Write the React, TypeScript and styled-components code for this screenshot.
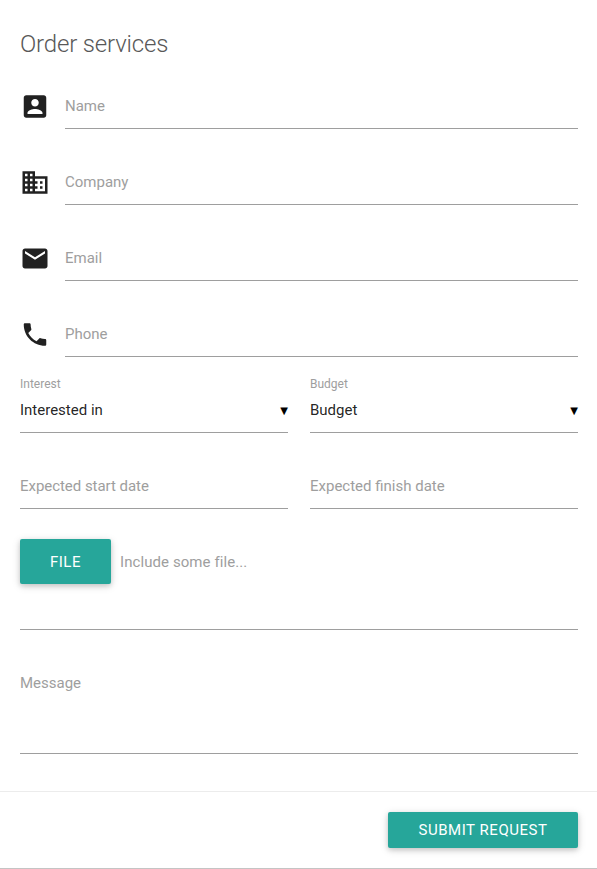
import React from 'react';
import styled, { createGlobalStyle } from 'styled-components';

const Global = createGlobalStyle`
  *, *::before, *::after { box-sizing: border-box; }
  body { margin: 0; background: #fff; font-family: Roboto, sans-serif; font-size: 15px; line-height: 1.5; color: rgba(0,0,0,0.87); }
`;

const elevation = '0 2px 5px 0 rgba(0,0,0,0.16), 0 2px 10px 0 rgba(0,0,0,0.12)';

const Card = styled.form`
  display: flex;
  flex-direction: column;
  height: 869px;
  background: #fff;
  border-bottom: 1px solid #c4c4c4;
`;

const Content = styled.div`
  height: 791px;
  padding: 28px 19px 0 20px;
`;

const Title = styled.h1`
  margin: 0;
  height: 56px;
  font-size: 24px;
  font-weight: 300;
  line-height: 32px;
  letter-spacing: -0.16px;
  color: #585858;
`;

const Field = styled.div<{ $height?: number }>`
  display: flex;
  align-items: flex-start;
  height: ${(p) => p.$height ?? 76}px;
`;

const IconBox = styled.div`
  flex: 0 0 45px;
  height: 45px;
  padding-top: 7px;
  color: #212121;
  svg { display: block; width: 30px; height: 30px; fill: currentColor; }
`;

const Control = styled.div<{ $height?: number; $muted?: boolean; $spacing?: number }>`
  flex: 1;
  height: ${(p) => p.$height ?? 45}px;
  border-bottom: 1px solid #9e9e9e;
  line-height: 44px;
  letter-spacing: ${(p) => p.$spacing ?? 0}px;
  color: ${(p) => (p.$muted ? '#9e9e9e' : 'rgba(0,0,0,0.87)')};
`;

const Columns = styled.div`
  display: grid;
  grid-template-columns: 268px 268px;
  column-gap: 22px;
`;

const SelectField = styled.div`
  position: relative;
  height: 76px;
`;

const FloatingLabel = styled.label`
  position: absolute;
  top: -13px;
  left: 0;
  font-size: 12px;
  line-height: 18px;
  color: #9e9e9e;
`;

const SelectControl = styled(Control)`
  display: flex;
  justify-content: space-between;
`;

const Caret = styled.span`
  font-family: "DejaVu Sans", sans-serif;
  font-size: 10px;
  line-height: 46px;
  letter-spacing: 0;
  color: #000;
`;

const Button = styled.button<{ $width: number; $height: number }>`
  width: ${(p) => p.$width}px;
  height: ${(p) => p.$height}px;
  padding: 0;
  border: 0;
  border-radius: 2px;
  background: #26a69a;
  color: #fff;
  font: 400 15px Roboto, sans-serif;
  letter-spacing: 0.54px;
  text-transform: uppercase;
  box-shadow: ${elevation};
`;

const FileField = styled.div`
  display: flex;
  flex-wrap: wrap;
  align-content: flex-start;
  column-gap: 9px;
  height: 122px;
`;

const FileHint = styled.span`
  line-height: 46px;
  letter-spacing: 0.08px;
  color: #9e9e9e;
`;

const FileLine = styled.div`
  flex: 0 0 100%;
  height: 45px;
  border-bottom: 1px solid #9e9e9e;
`;

const Footer = styled.footer`
  display: flex;
  justify-content: flex-end;
  align-items: flex-start;
  height: 77px;
  padding: 20px 19px 0;
  border-top: 1px solid rgba(160,160,160,0.2);
`;

const contacts = [
  { label: 'Name', path: 'M3 5v14c0 1.1.89 2 2 2h14c1.1 0 2-.9 2-2V5c0-1.1-.9-2-2-2H5c-1.11 0-2 .9-2 2zm12 4c0 1.66-1.34 3-3 3s-3-1.34-3-3 1.34-3 3-3 3 1.34 3 3zm-9 8c0-2 4-3.1 6-3.1s6 1.1 6 3.1v1H6v-1z' },
  { label: 'Company', path: 'M12 7V3H2v18h20V7H12zM6 19H4v-2h2v2zm0-4H4v-2h2v2zm0-4H4V9h2v2zm0-4H4V5h2v2zm4 12H8v-2h2v2zm0-4H8v-2h2v2zm0-4H8V9h2v2zm0-4H8V5h2v2zm10 12h-8v-2h2v-2h-2v-2h2v-2h-2V9h8v10zm-2-8h-2v2h2v-2zm0 4h-2v2h2v-2z' },
  { label: 'Email', path: 'M20 4H4c-1.1 0-1.99.9-1.99 2L2 18c0 1.1.9 2 2 2h16c1.1 0 2-.9 2-2V6c0-1.1-.9-2-2-2zm0 4l-8 5-8-5V6l8 5 8-5v2z' },
  { label: 'Phone', path: 'M6.62 10.79c1.44 2.83 3.76 5.14 6.59 6.59l2.2-2.2c.27-.27.67-.36 1.02-.24 1.12.37 2.33.57 3.57.57.55 0 1 .45 1 1V20c0 .55-.45 1-1 1-9.39 0-17-7.61-17-17 0-.55.45-1 1-1h3.5c.55 0 1 .45 1 1 0 1.25.2 2.45.57 3.57.11.35.03.74-.25 1.02l-2.2 2.2z' },
];

export default function App() {
  return (
    <>
      <Global />
      <Card>
        <Content>
          <Title>Order services</Title>
          {contacts.map((c) => (
            <Field key={c.label}>
              <IconBox><svg viewBox="0 -0.4 24 24"><path d={c.path} /></svg></IconBox>
              <Control $muted>{c.label}</Control>
            </Field>
          ))}
          <Columns>
            {[['Interest', 'Interested in'], ['Budget', 'Budget']].map(([label, value]) => (
              <SelectField key={label}>
                <FloatingLabel>{label}</FloatingLabel>
                <SelectControl>{value}<Caret>▼</Caret></SelectControl>
              </SelectField>
            ))}
            <Field $height={75}><Control $muted $spacing={-0.04}>Expected start date</Control></Field>
            <Field $height={75}><Control $muted>Expected finish date</Control></Field>
          </Columns>
          <FileField>
            <Button type="button" $width={91} $height={45}>File</Button>
            <FileHint>Include some file...</FileHint>
            <FileLine />
          </FileField>
          <Field><Control $muted $height={93}>Message</Control></Field>
        </Content>
        <Footer><Button type="button" $width={190} $height={36}>Submit request</Button></Footer>
      </Card>
    </>
  );
}
